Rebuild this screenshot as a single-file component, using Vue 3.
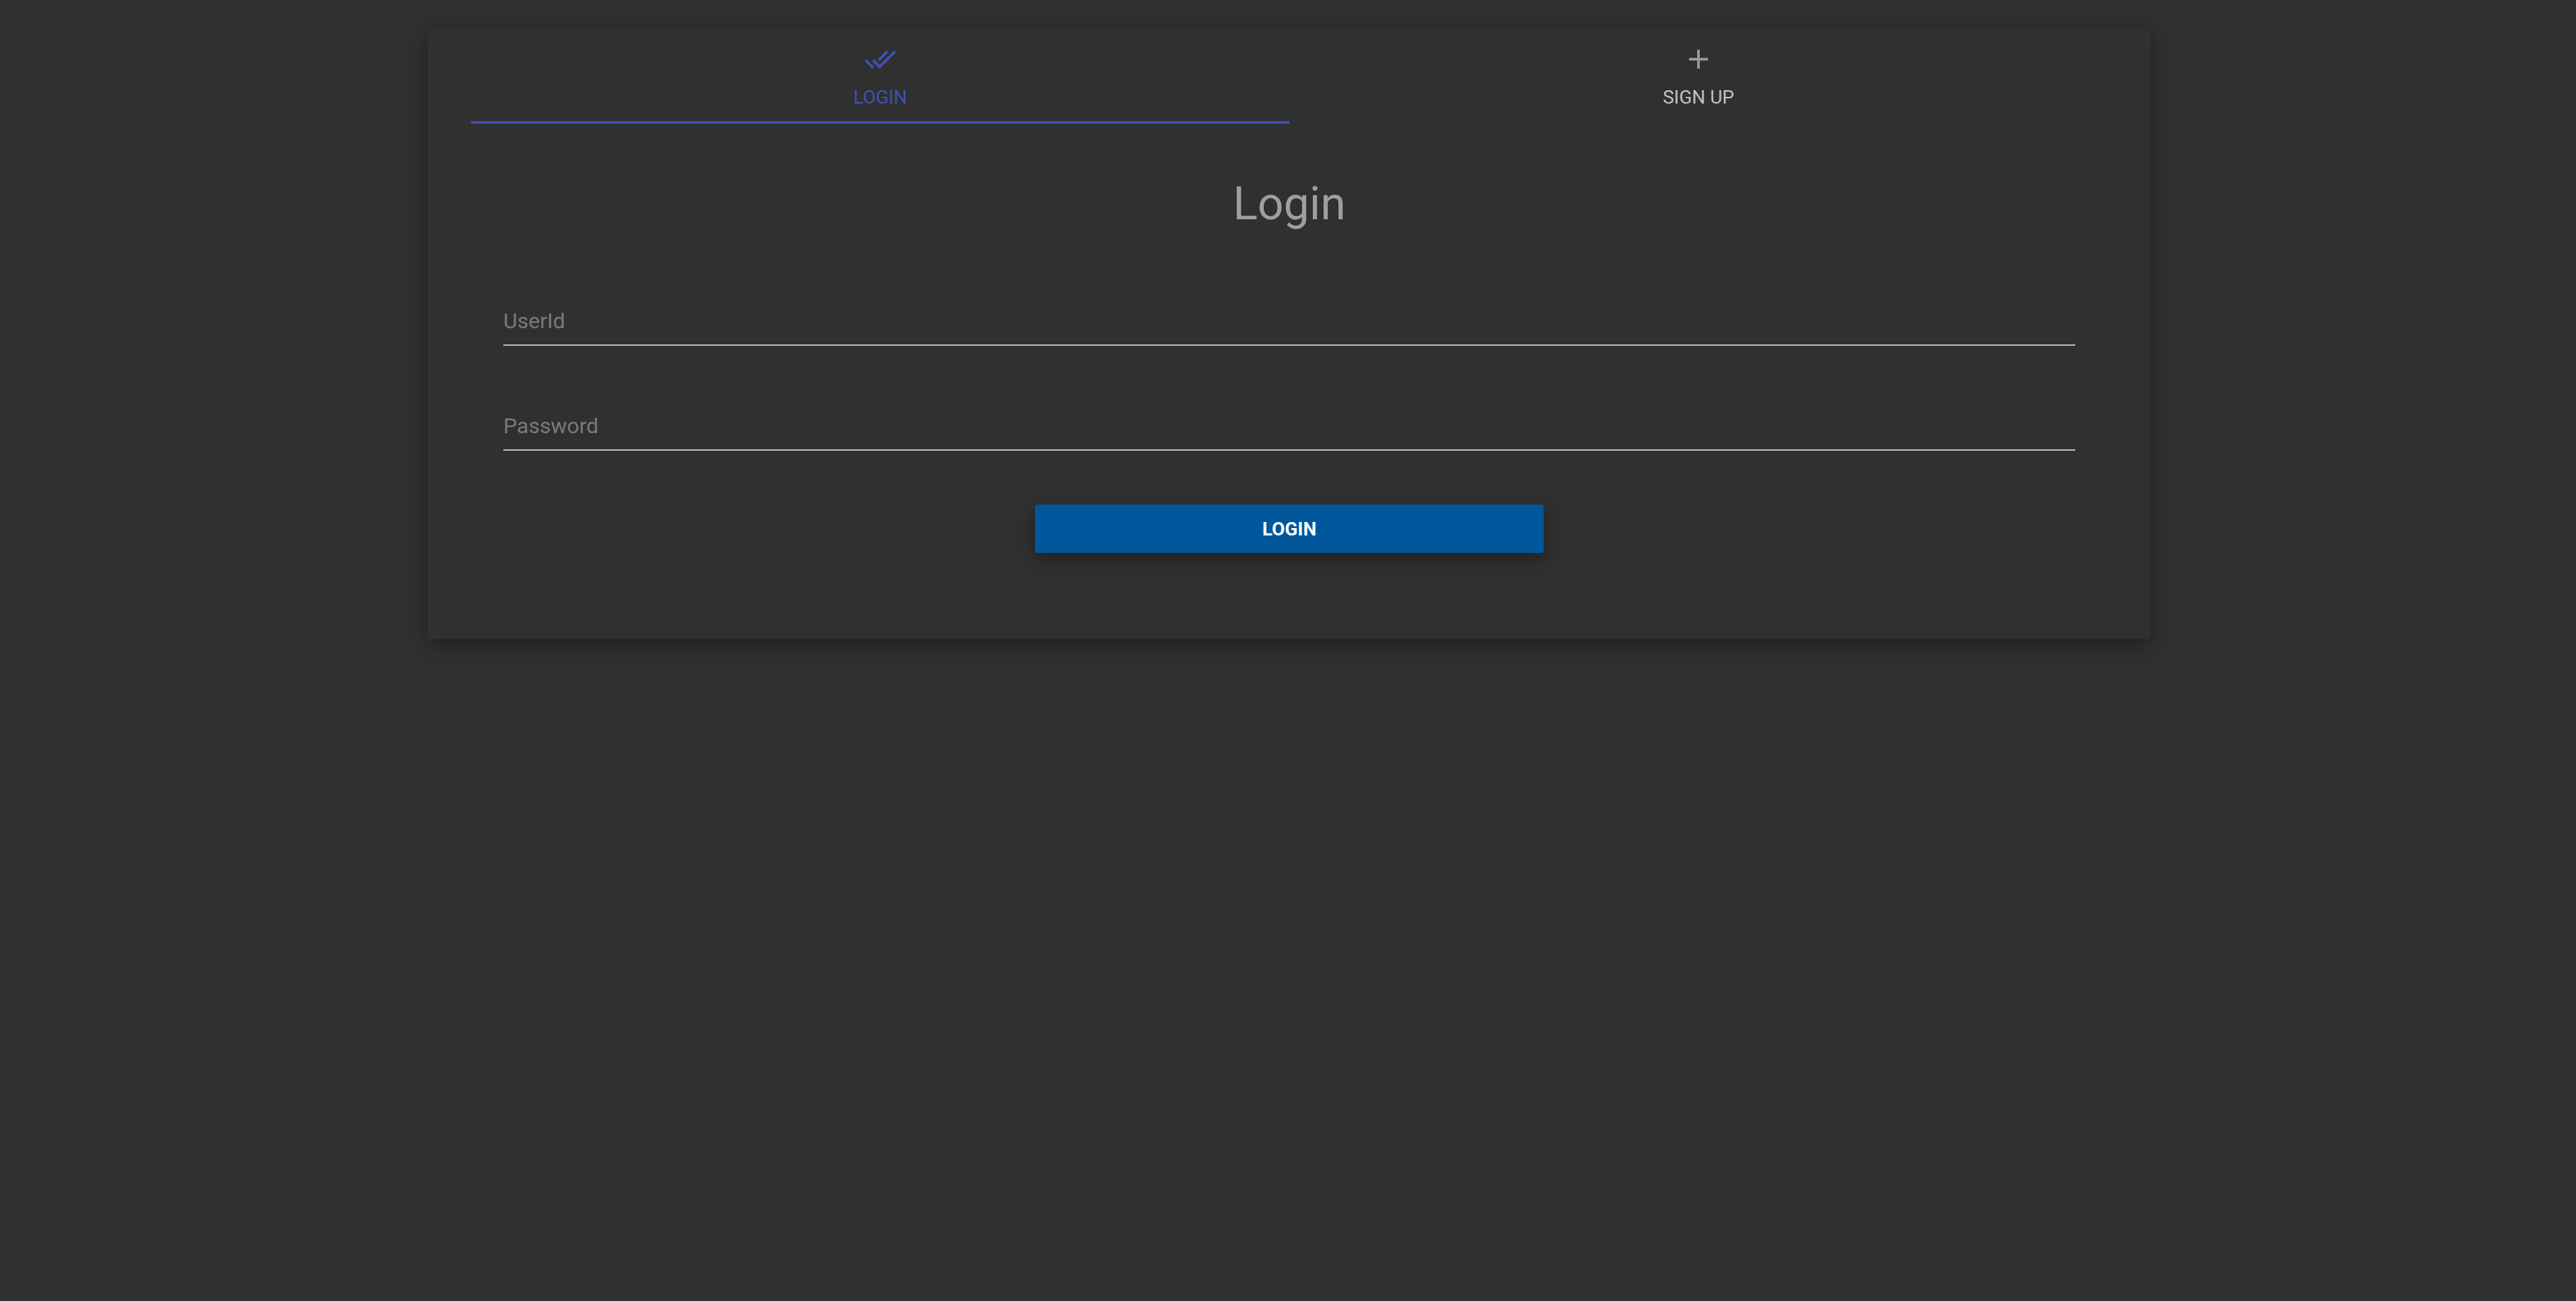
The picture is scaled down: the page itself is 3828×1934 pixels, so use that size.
<script setup>
import { ref } from 'vue'

const activeTab = ref('login')
const userId = ref('')
const password = ref('')
</script>

<template>
  <main class="page">
    <section class="card">
      <nav class="tabs" role="tablist">
        <button
          type="button"
          class="tab"
          role="tab"
          :class="{ active: activeTab === 'login' }"
          :aria-selected="activeTab === 'login'"
          @click="activeTab = 'login'"
        >
          <svg class="icon" viewBox="0 0 24 24" aria-hidden="true">
            <path d="M18 7l-1.410-1.410-6.340 6.340 1.410 1.410L18 7zm4.240-1.410L11.660 16.170 7.480 12l-1.410 1.410L11.660 19l12-12-1.420-1.410zM.410 13.410L6 19l1.410-1.410L1.830 12 .410 13.410z" />
          </svg>
          <span>LOGIN</span>
        </button>
        <button
          type="button"
          class="tab"
          role="tab"
          :class="{ active: activeTab === 'signup' }"
          :aria-selected="activeTab === 'signup'"
          @click="activeTab = 'signup'"
        >
          <svg class="icon" viewBox="0 0 24 24" aria-hidden="true">
            <path d="M19 13h-6v6h-2v-6H5v-2h6V5h2v6h6v2z" />
          </svg>
          <span>SIGN UP</span>
        </button>
      </nav>

      <form class="form" @submit.prevent>
        <h1 class="title">Login</h1>
        <div class="field">
          <input id="user-id" v-model="userId" type="text" autocomplete="username" />
          <label v-show="!userId" for="user-id">UserId</label>
        </div>
        <div class="field">
          <input id="password" v-model="password" type="password" autocomplete="current-password" />
          <label v-show="!password" for="password">Password</label>
        </div>
        <button type="submit" class="submit">LOGIN</button>
      </form>
    </section>
  </main>
</template>

<style>
body {
  background: #303030;
}
</style>

<style scoped>
.page {
  display: flex;
  justify-content: center;
  align-items: flex-start;
  box-sizing: border-box;
  min-height: 100vh;
  padding: 40px 0 40px 4px;
  background: #303030;
  font-family: Roboto, "Liberation Sans", sans-serif;
}

.card,
.submit {
  box-shadow:
    0 10px 22px 0 rgba(0, 0, 0, 0.18),
    0 8px 30px 0 rgba(0, 0, 0, 0.15);
}

.card {
  box-sizing: border-box;
  width: 100%;
  max-width: 2560px;
  padding: 0 64px 128px;
  background: #303030;
}

.tabs {
  display: flex;
}

.tab {
  flex: 1;
  display: flex;
  flex-direction: column;
  align-items: center;
  gap: 17px;
  box-sizing: border-box;
  height: 144px;
  padding: 24px 0 0;
  border: 0;
  border-bottom: 4px solid transparent;
  background: none;
  color: #c1c1c1;
  font: 400 28px/32px Roboto, "Liberation Sans", sans-serif;
  cursor: pointer;
}

.tab.active {
  border-bottom-color: #3f51b5;
  color: #3f51b5;
}

.icon {
  width: 48px;
  height: 48px;
  fill: #989898;
}

.tab.active .icon {
  fill: #3f51b5;
}

.form {
  display: flex;
  flex-direction: column;
  padding: 79px 48px 0;
}

.title {
  margin: 0 0 85px;
  color: #9e9e9e;
  font-size: 68px;
  font-weight: 400;
  line-height: 80px;
  text-align: center;
}

.field {
  position: relative;
  height: 156px;
}

.field input {
  display: block;
  box-sizing: border-box;
  width: 100%;
  height: 86px;
  padding: 28px 0 12px;
  border: 0;
  border-bottom: 2px solid #c1c1c1;
  outline: 0;
  background: none;
  color: #ffffff;
  font: 400 32px/40px Roboto, "Liberation Sans", sans-serif;
}

.field label {
  position: absolute;
  top: 29px;
  left: 0;
  color: #797979;
  font-size: 32px;
  line-height: 40px;
  pointer-events: none;
}

.submit {
  align-self: center;
  width: 756px;
  max-width: 100%;
  height: 72px;
  margin-top: 10px;
  padding: 2px 16px 0;
  border: 0;
  border-radius: 4px;
  background: #01579b;
  color: #ffffff;
  font: 700 28px/32px Roboto, "Liberation Sans", sans-serif;
  cursor: pointer;
}
</style>
